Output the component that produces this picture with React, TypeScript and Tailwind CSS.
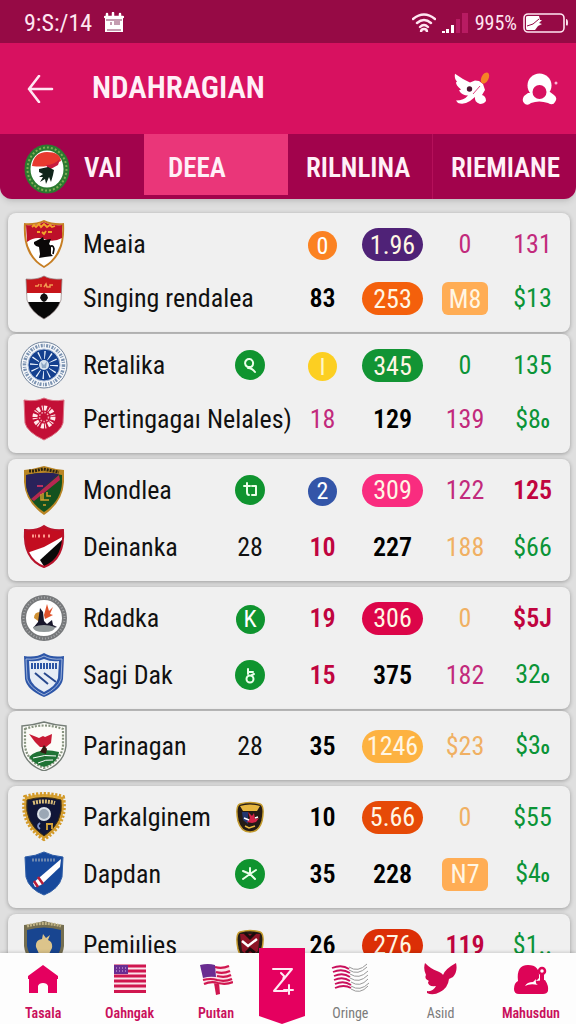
import type { ReactNode } from "react";

type Cell = { text: ReactNode; style: string };
type Row = {
  crest: ReactNode;
  name: string;
  badge?: ReactNode;
  cells: Cell[];
};

const dot = "inline-flex size-[29px] items-center justify-center rounded-full align-middle text-2xl";
const pill = "inline-flex h-[33px] w-[61px] items-center justify-center rounded-full align-middle text-[#fff6e4]";
const tag = "inline-flex h-[33px] w-[46px] items-center justify-center rounded-md bg-[#ffad55] align-middle text-[#fff6e4]";

const black = "font-semibold text-black";
const crimson = "font-semibold text-[#c0043f]";
const magenta = "text-[#c22a7c]";
const green = "text-[#0b9437]";
const sand = "text-[#f0b063]";

const Tail = ({ children }: { children: ReactNode }) => (
  <>
    {children}
    <span className="text-lg font-semibold">o</span>
  </>
);

const Crest = ({ children }: { children: ReactNode }) => (
  <svg viewBox="0 0 48 50" className="block h-[50px] w-12" fill="none" aria-hidden="true">
    {children}
  </svg>
);

const Disc = ({ children }: { children: ReactNode }) => (
  <svg viewBox="0 0 30 30" className="mx-auto block size-[30px]" fill="none" aria-hidden="true">
    <circle cx="15" cy="15" r="15" fill="#0f942f" />
    <g stroke="#eaffea" strokeWidth="2" strokeLinecap="round" strokeLinejoin="round">
      {children}
    </g>
  </svg>
);

/* Crests */

const meaiaCrest = (
  <Crest>
    <path d="M4 4Q15 5 24 1Q33 5 44 4Q45 22 40 32Q35 43 24 49Q13 43 8 32Q3 22 4 4Z" fill="#c77f24" />
    <path d="M6 6Q16 7 24 3Q32 7 42 6Q43 22 38 31Q34 41 24 47Q14 41 10 31Q5 22 6 6Z" fill="#fff" />
    <path d="M6 6Q16 7 24 3Q32 7 42 6L42 19Q33 24 24 20Q15 17 7 23Z" fill="#bd1029" />
    <path d="M12 8l2-2 2 2 3-3 2 3 3-3 3 3 3-2 2 2 3-1M17 13h3m2 0l2 2 2-3m2 1h4" stroke="#f2a52b" strokeWidth="1.8" />
    <path d="M14 23l6-3 3-2 1 3 7-1-2 5 2 2v8l2 2-8 1-6 1 1-4-1-7-3-1-2-2z" fill="#0b0808" />
    <path d="M30 28q3-3 4 2l-1 5" stroke="#0b0808" strokeWidth="1.6" />
  </Crest>
);

const singingCrest = (
  <Crest>
    <clipPath id="singing">
      <path d="M6 6Q17 7 24 3Q31 7 42 6L41 27Q37 39 24 46Q11 39 7 27Z" />
    </clipPath>
    <g clipPath="url(#singing)">
      <path d="M4 2h40v19H4z" fill="#c7151b" />
      <path d="M4 20h40v9H4z" fill="#fff" />
      <path d="M4 29h40v18H4z" fill="#080808" />
      <path d="M24 20l3 2 1 3-2 3-2 1-2-1-2-3 1-3z" fill="#111" />
    </g>
    <path d="M15 13h3l1-2m2 3v-3m3 3l2-3 1 3h3v-2h3" stroke="#f29a51" strokeWidth="1.5" />
    <path d="M6 6Q17 7 24 3Q31 7 42 6L41 27Q37 39 24 46Q11 39 7 27Z" stroke="#8d7b7b" strokeWidth=".7" />
  </Crest>
);

const retalikaCrest = (
  <Crest>
    <circle cx="24" cy="25" r="23" fill="#f5f7fa" stroke="#70839b" />
    <circle cx="24" cy="25" r="19.5" stroke="#7a92b1" strokeWidth="3.5" strokeDasharray="2 1 1 1.5" />
    <circle cx="24" cy="25" r="16" fill="#14408f" stroke="#a9bbd6" />
    <circle cx="24" cy="25" r="10" stroke="#eef6ff" strokeWidth="8" strokeDasharray="1.1 4.13" />
    <circle cx="24" cy="25" r="5" fill="#d7e3ee" />
    <path d="M21 22l3 3 3-4-1 7h-4z" fill="#8fa9c6" />
  </Crest>
);

const pertingagarCrest = (
  <Crest>
    <path d="M4 6Q16 8 24 4Q32 8 44 6L43 29Q41 38 24 46Q7 38 5 29Z" fill="#c30f36" stroke="#dc7183" />
    <circle cx="24" cy="23" r="9" stroke="#ffe9ea" strokeWidth="5" strokeDasharray="3 2 1 1" />
    <circle cx="24" cy="23" r="4.5" stroke="#f2a6b0" strokeWidth="1.5" strokeDasharray="1.5 1.5" />
  </Crest>
);

const mondleaCrest = (
  <Crest>
    <path d="M4 5Q14 4 24 1Q34 4 44 5V17Q43 37 24 50Q5 37 4 17Z" fill="#b98524" />
    <path d="M6 10Q24 6 42 10V18Q41 36 24 47Q7 36 6 18Z" fill="#14521f" />
    <path d="M6 10Q24 6 39 9L11 34Q6 26 6 18Z" fill="#29225a" />
    <path d="M11 34L39 10l1 5-26 21z" fill="#b62752" />
    <path d="M9 6l5 0 4-1 5-1 5 1 5 1 6 1" stroke="#2b2410" strokeWidth="3" strokeDasharray="2 1" />
    <path d="M17 21h6" stroke="#c83562" strokeWidth="1.8" />
    <path d="M21 29v6h8m-6-7v7m4-8v4h4M23 40h3" stroke="#d4a02c" strokeWidth="1.5" />
  </Crest>
);

const deinankaCrest = (
  <Crest>
    <clipPath id="deinanka">
      <path d="M5 8Q17 9 24 4Q31 9 43 8Q45 37 24 45Q3 37 5 8Z" />
    </clipPath>
    <g clipPath="url(#deinanka)">
      <path d="M2 2h44v46H2z" fill="#fff" />
      <path d="M2 2h44v11L24 25 4 32z" fill="#c30d20" />
      <path d="M43 17L20 38l5 8 16-6 4-15z" fill="#0a0a0a" />
    </g>
    <path d="M12 14h4m2 0h3m2 0h3m2 0h3" stroke="#ff9a8c" strokeWidth="3" strokeDasharray="2 1" />
    <path d="M5 8Q17 9 24 4Q31 9 43 8Q45 37 24 45Q3 37 5 8Z" stroke="#b8132b" strokeWidth="2" />
  </Crest>
);

const rdadkaCrest = (
  <Crest>
    <circle cx="24" cy="25" r="20.5" fill="#fff" stroke="#77797b" strokeWidth="5" />
    <circle cx="24" cy="25" r="20.5" stroke="#a6a8aa" strokeWidth="2" strokeDasharray="1 2" />
    <path d="M24 22l3-11 2 7 4-4-3 7 3 1-8 4z" fill="#e0522b" />
    <path d="M14 25q0-6 6-6l1 11z" fill="#cf9033" />
    <path d="M18 29l2-14 3 4 1 9 3 3 5-4 1 5 4 2-7 2-17-1z" fill="#18172b" />
    <path d="M13 34q11-4 22 0 0 5-11 5t-11-5z" fill="#92999a" />
  </Crest>
);

const sagiCrest = (
  <Crest>
    <path d="M4 6Q16 8 24 3Q32 8 44 6L43 29Q41 40 24 47Q7 40 5 29Z" fill="#2d56a8" />
    <path d="M6 9Q17 10 24 6Q31 10 42 9L41 29Q38 38 24 45Q10 38 7 29Z" stroke="#b9c9e6" strokeWidth=".8" />
    <path d="M9 11Q17 12 24 9Q31 12 39 11L38 28Q36 36 24 42Q12 36 10 28Z" fill="#e6ecf5" />
    <path d="M11 16h26" stroke="#2b54a4" strokeWidth="6" strokeDasharray="2 1" />
    <path d="M15 23l13 11M24 23l12 9" stroke="#27488e" strokeWidth="2" />
  </Crest>
);

const parinaganCrest = (
  <Crest>
    <path d="M2 5Q14 4 24 1Q34 4 46 5V25Q44 43 24 50Q4 43 2 25Z" fill="#fbfbf7" stroke="#747d76" strokeWidth="1.4" />
    <path d="M5 8Q24 1 43 8V25Q41 40 24 47Q7 40 5 25Z" stroke="#87947f" strokeWidth="2.2" strokeDasharray="2 1.4" />
    <path d="M9 36Q19 26 39 31Q38 42 24 46Q14 43 9 36Z" fill="#207335" />
    <path d="M13 37q12-4 23-2M18 42q8-4 15-3" stroke="#fff" />
    <path d="M9 13l10 4 4-2 2 1 7-3-1 9-5 4-6 0-5-5z" fill="#c81b34" />
    <path d="M20 31l4-7 3 4-1 5z" fill="#351a12" />
  </Crest>
);

const parkalginemCrest = (
  <Crest>
    <path d="M5 5Q24 -1 43 5Q48 32 24 47Q0 32 5 5Z" fill="#d6a33a" stroke="#d39a29" strokeWidth="4" strokeDasharray="2.2 1.6" />
    <path d="M7 8Q24 3 41 8Q44 31 24 44Q4 31 7 8Z" fill="#101638" stroke="#46340f" />
    <path d="M13 11q11-3 22 0" stroke="#d9bd7a" strokeWidth="4" strokeDasharray="2 1" />
    <circle cx="24" cy="22" r="6" fill="#9ba7b5" stroke="#dce2e9" strokeWidth="2" />
    <path d="M20 31q-4 3 0 6" stroke="#7f93c7" strokeWidth="1.8" />
    <path d="M26 32h7M27 32v6M32 32v5" stroke="#d6a33a" strokeWidth="1.8" />
  </Crest>
);

const dapdanCrest = (
  <Crest>
    <path d="M5 8Q16 7 24 3Q32 7 43 8L42 28Q39 40 24 46Q9 40 6 28Z" fill="#17499c" stroke="#2e5da6" />
    <path d="M12 11h24" stroke="#6e87ae" strokeWidth="3" strokeDasharray="2 1" />
    <path d="M41 10l-1 8-19 18-6 2-2-4z" fill="#fff" />
    <path d="M18 28l5 7M14 32l4 6" stroke="#b91d39" strokeWidth="2.5" />
  </Crest>
);

const pemiliesCrest = (
  <Crest>
    <path d="M4 5Q14 4 24 1Q34 4 44 5V26Q42 43 24 50Q6 43 4 26Z" fill="#746e50" />
    <path d="M7 10Q24 5 41 10V26Q39 39 24 46Q9 39 7 26Z" fill="#184590" />
    <path d="M7 6Q24 1 41 6" stroke="#c0b386" strokeWidth="3" strokeDasharray="2 1" />
    <path d="M16 27q-1-7 6-8l1-5 3 4 4-3-2 5q5 2 4 8l-4 8h-8z" fill="#dcc48b" />
  </Crest>
);

/* Badges */

const loopBadge = (
  <Disc>
    <path d="M15 17a4 4 0 1 1 3-3q0 3-5 4 4 0 7 4" />
  </Disc>
);

const hookBadge = (
  <Disc>
    <path d="M12 8v9q0 3 2 3M9 11h6M17 11h4v9h-4" />
  </Disc>
);

const keyBadge = (
  <Disc>
    <circle cx="15" cy="19" r="3.5" />
    <path d="M13 14V9M13 12h5M17 15l2-1" />
  </Disc>
);

const starBadge = (
  <Disc>
    <path d="M15 9v6l-7 5M8 12l7 3 6-4M15 15l5 5" />
  </Disc>
);

const letterBadge = <span className={`${dot} bg-[#0f942f] text-white`}>K</span>;

const MiniCrest = ({ children }: { children: ReactNode }) => (
  <svg viewBox="0 0 28 32" className="mx-auto block h-8 w-7" fill="none" aria-hidden="true">
    <path d="M4 3Q14 0 24 3Q29 5 26 20Q23 31 14 31Q5 31 2 20Q-1 5 4 3Z" fill="#241b16" stroke="#c39a2c" strokeWidth="1.5" />
    {children}
  </svg>
);

const goldMini = (
  <MiniCrest>
    <path d="M4 5Q14 2 24 5L21 10H7z" fill="#e6b640" />
    <path d="M6 11h6v12l-5-4z" fill="#23366f" />
    <path d="M12 11l4 4 2-3 1 6 4-1-3 4-4 1-5-1 3-4z" fill="#d32347" />
    <path d="M8 17l5 2M19 17l3-1" stroke="#fff" strokeWidth="1.5" />
    <path d="M9 25l4 2 6-2" stroke="#e6b640" strokeWidth="1.5" />
  </MiniCrest>
);

const redMini = (
  <MiniCrest>
    <path d="M4 5h20l-2 17-8 7-8-7z" fill="#8d1426" />
    <path d="M6 12l6 5 9-7" stroke="#fff" strokeWidth="2.5" />
    <path d="M9 4l5 5 5-5M10 24l4-4 5 4" stroke="#1b0c0c" strokeWidth="3" />
  </MiniCrest>
);

const groups: { box: string; row: string; rows: Row[] }[] = [
  {
    box: "mt-3.5 pt-1 pb-[7px]",
    row: "h-[54px]",
    rows: [
      {
        crest: meaiaCrest,
        name: "Meaia",
        cells: [
          { text: <span className={`${dot} bg-[#fb8222] text-white`}>0</span>, style: "" },
          { text: <span className={`${pill} bg-[#4f2277]`}>1.96</span>, style: "" },
          { text: "0", style: magenta },
          { text: "131", style: magenta },
        ],
      },
      {
        crest: singingCrest,
        name: "Sınging rendalea",
        cells: [
          { text: "83", style: black },
          { text: <span className={`${pill} bg-[#f4600c]`}>253</span>, style: "" },
          { text: <span className={tag}>M8</span>, style: "" },
          { text: "$13", style: green },
        ],
      },
    ],
  },
  {
    box: "mt-0.5 pt-1 pb-[7px]",
    row: "h-[54px]",
    rows: [
      {
        crest: retalikaCrest,
        name: "Retalika",
        badge: loopBadge,
        cells: [
          { text: <span className={`${dot} bg-[#fccf22] text-[#fff6c8]`}>I</span>, style: "" },
          { text: <span className={`${pill} bg-[#129434]`}>345</span>, style: "" },
          { text: "0", style: green },
          { text: "135", style: green },
        ],
      },
      {
        crest: pertingagarCrest,
        name: "Pertingagaı Nelales)",
        cells: [
          { text: "18", style: magenta },
          { text: "129", style: black },
          { text: "139", style: magenta },
          { text: <Tail>$8</Tail>, style: green },
        ],
      },
    ],
  },
  {
    box: "mt-1.5 pt-0.5 pb-1.5",
    row: "h-[57px]",
    rows: [
      {
        crest: mondleaCrest,
        name: "Mondlea",
        badge: hookBadge,
        cells: [
          { text: <span className={`${dot} bg-[#3355a8] text-white`}>2</span>, style: "" },
          { text: <span className={`${pill} bg-[#f92c7f]`}>309</span>, style: "" },
          { text: "122", style: magenta },
          { text: "125", style: crimson },
        ],
      },
      {
        crest: deinankaCrest,
        name: "Deinanka",
        badge: "28",
        cells: [
          { text: "10", style: crimson },
          { text: "227", style: black },
          { text: "188", style: sand },
          { text: "$66", style: green },
        ],
      },
    ],
  },
  {
    box: "mt-1.5 pt-0.5 pb-1.5",
    row: "h-[57px]",
    rows: [
      {
        crest: rdadkaCrest,
        name: "Rdadka",
        badge: letterBadge,
        cells: [
          { text: "19", style: crimson },
          { text: <span className={`${pill} bg-[#dc0549]`}>306</span>, style: "" },
          { text: "0", style: sand },
          { text: "$5J", style: crimson },
        ],
      },
      {
        crest: sagiCrest,
        name: "Sagi Dak",
        badge: keyBadge,
        cells: [
          { text: "15", style: crimson },
          { text: "375", style: black },
          { text: "182", style: magenta },
          { text: <Tail>32</Tail>, style: green },
        ],
      },
    ],
  },
  {
    box: "mt-0.5 py-1.5",
    row: "h-[57px]",
    rows: [
      {
        crest: parinaganCrest,
        name: "Parinagan",
        badge: "28",
        cells: [
          { text: "35", style: black },
          { text: <span className={`${pill} bg-[#fdb241]`}>1246</span>, style: "" },
          { text: "$23", style: sand },
          { text: <Tail>$3</Tail>, style: green },
        ],
      },
    ],
  },
  {
    box: "mt-1.5 pt-0.5 pb-1.5",
    row: "h-[57px]",
    rows: [
      {
        crest: parkalginemCrest,
        name: "Parkalginem",
        badge: goldMini,
        cells: [
          { text: "10", style: black },
          { text: <span className={`${pill} bg-[#e64a07]`}>5.66</span>, style: "" },
          { text: "0", style: sand },
          { text: "$55", style: green },
        ],
      },
      {
        crest: dapdanCrest,
        name: "Dapdan",
        badge: starBadge,
        cells: [
          { text: "35", style: black },
          { text: "228", style: black },
          { text: <span className={tag}>N7</span>, style: "" },
          { text: <Tail>$4</Tail>, style: green },
        ],
      },
    ],
  },
  {
    box: "mt-1.5 pt-0.5 pb-1.5",
    row: "h-[57px]",
    rows: [
      {
        crest: pemiliesCrest,
        name: "Pemiılies",
        badge: redMini,
        cells: [
          { text: "26", style: black },
          { text: <span className={`${pill} bg-[#dc2f06]`}>276</span>, style: "" },
          { text: "119", style: crimson },
          { text: "$1..", style: green },
        ],
      },
    ],
  },
];

const tabBase = "flex h-[65px] w-1/4 items-center px-[18px] pt-1 text-[27px] font-semibold text-[#fff0f7]";

const navBase = "flex flex-col items-center gap-2 pt-2.5 text-sm";

function StatusBar() {
  return (
    <div className="flex h-[43px] items-center bg-[#960a45] pt-0.5 pr-2 pl-6 text-[#ffe6f1]">
      <span className="text-2xl">9:S:/14</span>
      <svg viewBox="0 0 20 21" className="ml-3 h-[21px] w-5" fill="none" aria-hidden="true">
        <path d="M1 6h18v14H1z" fill="#fff" />
        <path d="M3 5V2m6 3V1m7 4V2M1 5h18" stroke="#fff" strokeWidth="2.5" strokeLinecap="round" />
        <path d="M2 8h16M7 10v3m3-3h6M10 12h6M3 18h14" stroke="#8a3a62" />
      </svg>
      <div className="ml-auto flex items-center gap-1.5">
        <svg viewBox="0 0 24 20" className="h-5 w-6" fill="none" stroke="currentColor" strokeWidth="2.4" aria-hidden="true">
          <path d="M1 6q11-9 22 0M5 10q7-6 14 0M8 14q4-4 8 0" strokeLinecap="round" />
          <path d="M9 19q0-3 3-3t3 3" />
        </svg>
        <svg viewBox="0 0 27 21" className="h-[21px] w-[27px]" aria-hidden="true">
          <path d="M0 19h3v2H0zM4 17h3v4H4zM9 13h3v8H9z" fill="#fff" />
          <path d="M14 7h4v14h-4zM20 1h6v20h-6z" fill="#b81b62" />
        </svg>
        <span className="text-xl">995%</span>
        <svg viewBox="0 0 45 20" className="h-5 w-[45px]" fill="none" aria-hidden="true">
          <rect x="1" y="1" width="40" height="18" rx="4" stroke="currentColor" strokeWidth="1.6" />
          <path d="M43 6q2 0 2 4t-2 2z" fill="currentColor" />
          <path d="M3 4q0-1 2-1h11l1 4h2l-3 3 3 1-4 2-3 4H4q-1 0-1-2z" fill="#fff" />
          <path d="M4 13l6-2 6-5" stroke="#960a45" />
        </svg>
      </div>
    </div>
  );
}

function Header() {
  return (
    <header className="relative overflow-hidden rounded-b-xl bg-[#a2034c] shadow-md">
      <StatusBar />
      <div className="flex h-[91px] items-center bg-[#d81160] pr-[18px] pl-[27px]">
        <button type="button" aria-label="Back" className="text-[#ffe6f1]">
          <svg viewBox="0 0 27 28" className="block h-7 w-[27px]" fill="none" stroke="currentColor" strokeWidth="2.6" strokeLinecap="round" strokeLinejoin="round">
            <path d="M12 1L2 14l10 13M2 14h23" />
          </svg>
        </button>
        <h1 className="ml-[38px] text-[31px] font-semibold text-[#fff0f7]">NDAHRAGIAN</h1>
        <button type="button" aria-label="Bird" className="ml-auto">
          <svg viewBox="0 0 36 33" className="block h-[33px] w-9" aria-hidden="true">
            <path d="M1 1.700L9 7l7 3.500 5-2 4 .5 4 3 2 6-3 5q4 1 4 6-2 3-6 3-6-2-5-7l-5 4q-6 4-12 2l-2-2.500q8 0 12-5-6 0-9-5l2-1q-5-4-5-7l1-1q-3-3-2-8z" fill="#fff" />
            <ellipse cx="31" cy="6" rx="3.500" ry="6" transform="rotate(28 31 6)" fill="#f58426" />
            <path d="M19 22l7-8" stroke="#d81160" strokeWidth=".8" />
            <circle cx="15.500" cy="17" r="2.700" fill="#4a1430" />
          </svg>
        </button>
        <button type="button" aria-label="Profile" className="ml-8">
          <svg viewBox="0 0 36 32" className="block h-8 w-9" aria-hidden="true">
            <circle cx="17.500" cy="12.500" r="12" fill="#fff" />
            <path d="M6 20l-4 3q-3 5 1 8 3 2 6-1 8-3 17 0 5 3 7-1 3-4-1-7l-4-3z" fill="#fff" />
            <circle cx="17.500" cy="19" r="7" fill="#d81160" />
            <circle cx="34" cy="10" r="1.500" fill="#ffb3d3" />
          </svg>
        </button>
      </div>
      <nav className="flex">
        <button type="button" className={`${tabBase} gap-3.5`}>
          <svg viewBox="0 0 46 50" className="ml-1.5 h-[50px] w-[46px] shrink-0" fill="none" aria-hidden="true">
            <ellipse cx="23" cy="25" rx="19.500" ry="21.500" fill="#fff" stroke="#2c7a30" strokeWidth="6" />
            <ellipse cx="23" cy="25" rx="19.500" ry="21.500" stroke="#7fae55" strokeWidth="2" strokeDasharray="2 2" />
            <path d="M8 22Q10 8 23 8t14 9Q29 21 23 22T8 22z" fill="#e8392f" />
            <path d="M22 21q8 0 14-6l-2 6-9 5z" fill="#c81b3f" />
            <path d="M15 25l9-2 6 3-1 5-2 7-2-5-3 7-1-5-5 3 3-5-4 0 4-3-4-2z" fill="#11251b" />
          </svg>
          VAI
        </button>
        <button type="button" className={`${tabBase} bg-[#ea3679] pl-6 shadow-[inset_0_-4px_0_#a2034c]`}>
          DEEA
        </button>
        <button type="button" className={tabBase}>
          RILNLINA
        </button>
        <button type="button" className={`${tabBase} border-l border-[#b5105a]`}>
          RIEMIANE
        </button>
      </nav>
    </header>
  );
}

function TeamTable({ box, row, rows }: { box: string; row: string; rows: Row[] }) {
  return (
    <section className={`${box} rounded-lg bg-[#f0f0f0] shadow-[0_1px_4px_rgba(0,0,0,0.3)]`}>
      <table className="w-full table-fixed text-[26px] leading-8">
        <colgroup>
          <col className="w-[75px]" />
          <col />
          <col className="w-[74px]" />
          <col className="w-[71px]" />
          <col className="w-[69px]" />
          <col className="w-[76px]" />
          <col className="w-[67px]" />
        </colgroup>
        <tbody>
          {rows.map((team) => (
            <tr key={team.name} className={row}>
              <td className="pl-3">{team.crest}</td>
              <th scope="row" colSpan={team.badge ? 1 : 2} className="text-left font-normal whitespace-nowrap text-[#111]">
                {team.name}
              </th>
              {team.badge && <td className="text-center text-[#111]">{team.badge}</td>}
              {team.cells.map((cell, i) => (
                <td key={i} className={`${i === 3 ? "pr-2 text-center" : "text-center"} ${cell.style}`}>
                  {cell.text}
                </td>
              ))}
            </tr>
          ))}
        </tbody>
      </table>
    </section>
  );
}

function BottomNav() {
  return (
    <nav className="relative flex h-[71px] shrink-0 bg-[#fdfdfd] text-[#c9105c] shadow-[0_-1px_3px_rgba(0,0,0,0.15)]">
      <a href="#tasala" className={`${navBase} w-[15%] font-semibold`}>
        <svg viewBox="0 0 32 32" className="size-8" fill="#e5005f" aria-hidden="true">
          <path d="M16 2l15 11v3h-1v14h-9v-7q-1-3-5-3t-5 3v7H2V16H1v-3z" />
        </svg>
        Tasala
      </a>
      <a href="#oahngak" className={`${navBase} w-[15%] font-semibold`}>
        <svg viewBox="0 0 34 32" className="h-8 w-[34px]" aria-hidden="true">
          <path d="M1 2h32v28H1z" fill="#fbe3ea" />
          <path d="M1 3h32M1 8h32M1 13h32M1 18h32M1 23h32M1 28.500h32" stroke="#d0164f" strokeWidth="2.800" />
          <path d="M1 2h14v9H1z" fill="#6a2d91" />
          <path d="M3 5h11M3 8h11" stroke="#d9b8e8" strokeDasharray="1 2" />
        </svg>
        Oahngak
      </a>
      <a href="#puitan" className={`${navBase} w-[15%] font-semibold`}>
        <svg viewBox="0 0 34 32" className="h-8 w-[34px]" fill="none" aria-hidden="true">
          <path d="M15 20l5-1 1 12-4 1z" fill="#d0164f" />
          <path d="M2 3q8-3 14 0 7 2 14-1l4 18q-8 3-15 1-7-2-14 1z" fill="#fbe3ea" />
          <path d="M16 4q7 2 14-1M17 9q7 2 14-1M18 13q8 2 14-1M4 17q8-2 14 0 8 2 15-1M5 21q7-3 14-1 8 2 15-1" stroke="#d0164f" strokeWidth="2.200" />
          <path d="M1 2q8-2 15 0l1 12q-7-1-13 1z" fill="#6a2d91" />
        </svg>
        Puıtan
      </a>
      <a href="#z" aria-label="Z" className="-mt-[5px] block w-[46px]">
        <svg viewBox="0 0 46 76" className="h-[76px] w-[46px]" fill="none" aria-hidden="true">
          <path d="M0 0h46v68L23 76 0 68z" fill="#e5005f" />
          <path d="M14 21h19L15 43h13M30 37v9M25 42h9M22 25l3 3-1 4" stroke="#ffeaf3" strokeWidth="2" strokeLinecap="round" strokeLinejoin="round" />
        </svg>
      </a>
      <a href="#oringe" className={`${navBase} flex-1 text-[#7b7b7b]`}>
        <svg viewBox="0 0 38 32" className="h-8 w-[38px]" fill="none" aria-hidden="true">
          <path d="M18 4q9 6 18-3M18 7q9 6 18-3M19 11q9 6 18-3M19 15q9 6 18-3M20 19q9 6 17-3M20 23q9 6 18-3M20 26q9 6 17-3" stroke="#999" />
          <path d="M1 5q10-4 17 1M2 9q9-4 17 1M3 13q9-4 16 1M3 17q9-4 16 1M4 21q9-4 16 1M4 25q9-4 16 0" stroke="#c9105c" strokeWidth="1.800" />
        </svg>
        Oringe
      </a>
      <a href="#asiid" className={`${navBase} flex-1 text-[#7b7b7b]`}>
        <svg viewBox="0 0 34 32" className="h-8 w-[34px]" fill="#d0084f" aria-hidden="true">
          <path d="M1 0q6 6 12 8 5 2 6 4Q21 6 32 0q2 8-3 14l-4 2q-1 9-9 13-7 4-13 1l0-2q6 1 9-5-8 1-8-4l1-1q-5-2-3-6-3-6-1-12z" />
        </svg>
        Asiıd
      </a>
      <a href="#mahusdun" className={`${navBase} flex-1 font-semibold`}>
        <svg viewBox="0 0 36 32" className="h-8 w-9" fill="none" aria-hidden="true">
          <path d="M5 18Q3 2 15 2t11 13l-3 3 9-1q4 6 3 11-1 3-5 3H6q-5 0-5-5 0-6 4-8z" fill="#dd0457" />
          <circle cx="29" cy="8" r="3" stroke="#dd0457" strokeWidth="2.500" />
          <path d="M29 11v7" stroke="#dd0457" strokeWidth="4" />
          <path d="M12 23q2-4 8-4l3-3q-1 5 2 6-8-2-13 1z" fill="#fff" />
        </svg>
        Mahusdun
      </a>
    </nav>
  );
}

export default function App() {
  return (
    <div className="flex h-screen flex-col bg-[#dfdfdf] font-['Roboto_Condensed',Roboto,sans-serif]">
      <Header />
      <main className="min-h-0 flex-1 overflow-y-auto pr-1.5 pb-2 pl-2 [scrollbar-width:none]">
        {groups.map((group) => (
          <TeamTable key={group.rows[0].name} {...group} />
        ))}
      </main>
      <BottomNav />
    </div>
  );
}
